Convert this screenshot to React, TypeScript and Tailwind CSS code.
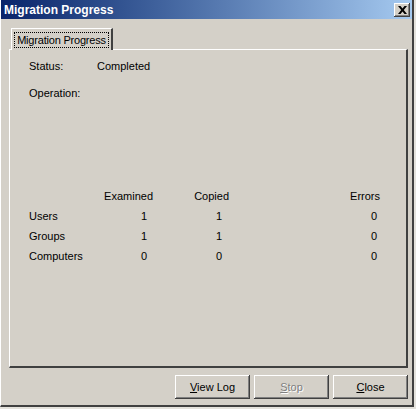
import React from "react";

const bevel =
  "shadow-[inset_-1px_-1px_#404040,inset_1px_1px_#ffffff,inset_-2px_-2px_#808080,inset_2px_2px_#d4d0c8]";

function DlgButton({ label, hot, disabled }: { label: string; hot: string; disabled?: boolean }) {
  const rest = label.slice(1);
  return (
    <button
      className={`flex h-[24px] w-[75px] items-center justify-center bg-[#d4d0c8] text-[11px] ${bevel} ${
        disabled ? "text-[#808080] [text-shadow:1px_1px_0_#ffffff]" : "text-black"
      }`}
    >
      <span>
        <span className="underline underline-offset-1">{hot}</span>
        {rest}
      </span>
    </button>
  );
}

const rows = [
  { name: "Users", examined: 1, copied: 1, errors: 0 },
  { name: "Groups", examined: 1, copied: 1, errors: 0 },
  { name: "Computers", examined: 0, copied: 0, errors: 0 },
];

export default function App() {
  return (
    <div
      className="h-[409px] w-[416px] bg-[#e4e2dc] text-black"
      style={{ fontFamily: '"Liberation Sans", Arial, sans-serif' }}
    >
      <div className="flex h-[407px] w-[414px] flex-col border-b-2 border-l border-r-2 border-b-[#404040] border-l-white border-r-[#404040] bg-[#d4d0c8]">
        {/* title bar */}
        <div className="flex h-[19px] shrink-0 items-center justify-between bg-gradient-to-r from-[#0a246a] to-[#a6caf0] pl-[3px] pr-[2px]">
          <span className="text-[12px] font-bold leading-none text-white">Migration Progress</span>
          <div className={`flex h-[14px] w-[16px] items-center justify-center bg-[#d4d0c8] ${bevel}`}>
            <svg width="9" height="8" viewBox="0 0 9 8">
              <path d="M0 0h2.5L4.5 2.5 6.5 0H9L5.8 4 9 8H6.5L4.5 5.5 2.5 8H0l3.2-4z" fill="#000" />
            </svg>
          </div>
        </div>

        <div className="flex flex-1 flex-col pl-[8px] pr-[4px] pt-[9px]">
          {/* tab */}
          <div className="relative z-10 -mb-[1px] ml-[2px] flex h-[22px] w-[102px] items-center border-l border-t border-r-2 border-l-white border-t-white border-r-[#404040] bg-[#d4d0c8] px-[2px] pt-[1px]">
            <div className="flex h-[16px] w-full items-center justify-center border border-dotted border-black text-[11px] tracking-[-0.2px]">
              Migration Progress
            </div>
          </div>

          {/* panel */}
          <div className="h-[319px] border-b-2 border-l border-r-2 border-t border-b-[#404040] border-l-white border-r-[#404040] border-t-white pl-[19px] pt-[10px] text-[11px] leading-[13px]">
            <div className="flex">
              <span className="w-[68px]">Status:</span>
              <span>Completed</span>
            </div>
            <div className="mt-[14px]">Operation:</div>

            <div className="mt-[86px] grid grid-cols-[78px_46px_76px_151px]">
              <div className="flex h-[20px] items-center" />
              <div className="flex h-[20px] items-center justify-end">Examined</div>
              <div className="flex h-[20px] items-center justify-end">Copied</div>
              <div className="flex h-[20px] items-center justify-end">Errors</div>
              {rows.map((r) => (
                <React.Fragment key={r.name}>
                  <div className="flex h-[20px] items-center">{r.name}</div>
                  <div className="flex h-[20px] items-center justify-end pr-[6px]">{r.examined}</div>
                  <div className="flex h-[20px] items-center justify-end pr-[7px]">{r.copied}</div>
                  <div className="flex h-[20px] items-center justify-end pr-[3px]">{r.errors}</div>
                </React.Fragment>
              ))}
            </div>
          </div>

          {/* buttons */}
          <div className="mt-[7px] flex justify-end gap-[4px]">
            <DlgButton label="View Log" hot="V" />
            <DlgButton label="Stop" hot="S" disabled />
            <DlgButton label="Close" hot="C" />
          </div>
        </div>
      </div>
    </div>
  );
}
